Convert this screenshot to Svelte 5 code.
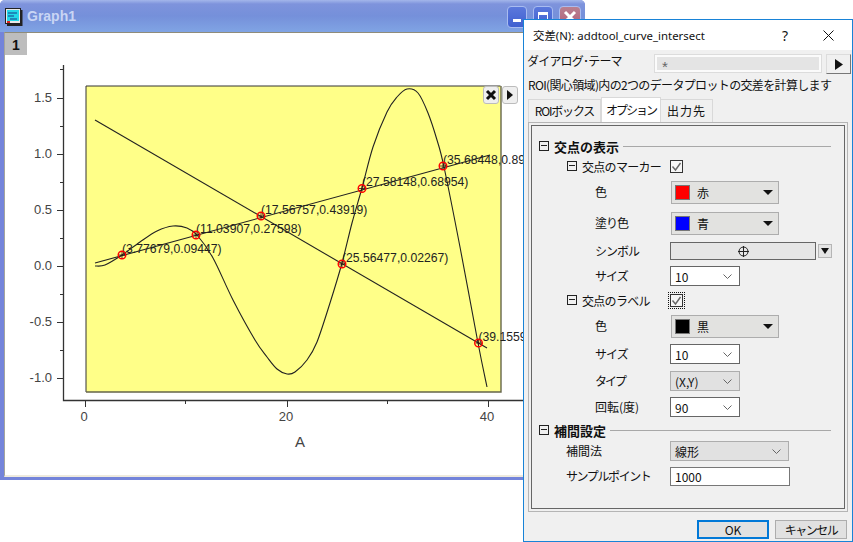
<script>
  // Graph data in pixel coordinates of the plot svg
  const curve = [[95,266],[105,265],[122,255],[140,242],[157,231],[173,226],[187,228],[197,235],[213,258],[233,300],[255,340],[267,357],[277,369],[287,374],[295,372],[307,360],[317,342],[330,303],[342,263],[352,223],[362,188],[373,147],[387,112],[397,97],[407,89],[418,93],[428,113],[437,140],[444,167],[460,247],[478,343],[487,387]]

  function smooth(pts) {
    let d = `M${pts[0][0]} ${pts[0][1]}`
    for (let i = 0; i < pts.length - 1; i++) {
      const p0 = pts[Math.max(i - 1, 0)]
      const p1 = pts[i]
      const p2 = pts[i + 1]
      const p3 = pts[Math.min(i + 2, pts.length - 1)]
      const c1 = [p1[0] + (p2[0] - p0[0]) / 6, p1[1] + (p2[1] - p0[1]) / 6]
      const c2 = [p2[0] - (p3[0] - p1[0]) / 6, p2[1] - (p3[1] - p1[1]) / 6]
      d += ` C${c1[0]} ${c1[1]} ${c2[0]} ${c2[1]} ${p2[0]} ${p2[1]}`
    }
    return d
  }

  const curvePath = smooth(curve)

  const markers = [
    { x: 122, y: 255, label: '(3.77679,0.09447)' },
    { x: 196, y: 235, label: '(11.03907,0.27598)' },
    { x: 261, y: 216, label: '(17.56757,0.43919)' },
    { x: 362, y: 188.5, label: '(27.58148,0.68954)' },
    { x: 443, y: 166, label: '(35.68448,0.89211)' },
    { x: 342, y: 264, label: '(25.56477,0.02267)' },
    { x: 478.5, y: 343, label: '(39.15598,-0.68)' }
  ]

  const yMajor = [[98, '1.5'], [154, '1.0'], [210, '0.5'], [266, '0.0'], [322, '-0.5'], [378, '-1.0']]
  const yMinor = [69, 126, 182, 238, 294, 350]
  const xMajor = [[85, '0'], [287, '20'], [488, '40']]
  const xMinor = [185, 387]
</script>

<div class="desktop">
  <section class="graph">
    <header class="graph__title">
      <svg class="graph__icon" width="18" height="18" viewBox="0 0 18 18">
        <rect x="0.5" y="0.5" width="15" height="15" fill="#e8e8e8" stroke="#222" />
        <rect x="2" y="2" width="12" height="11" fill="#22d8e8" />
        <path d="M3 5h9M3 8h6M5 11h7" stroke="#1a3a8a" />
        <rect x="2" y="13" width="3" height="2" fill="#e02020" />
        <path d="M16.5 2v15H2" fill="none" stroke="#222" stroke-width="2" />
      </svg>
      <span class="graph__name">Graph1</span>
      <div class="graph__controls">
        <button class="wbtn wbtn--min" aria-label="最小化"><i></i></button>
        <button class="wbtn wbtn--max" aria-label="最大化"><i></i></button>
        <button class="wbtn wbtn--close" aria-label="閉じる">
          <svg width="14" height="14" viewBox="0 0 14 14"><path d="M2 2l10 10M12 2L2 12" stroke="#fff" stroke-width="3" /></svg>
        </button>
      </div>
    </header>
    <div class="graph__body">
      <div class="layer-tab">1</div>
      <svg class="plot" width="580" height="446" viewBox="0 33 580 446">
        <rect x="86" y="86" width="415" height="306" fill="#ffff88" />
        <path d="M86 392V86H500.5" fill="none" stroke="#333" />
        <path d="M86 392H501V86" fill="none" stroke="#66664a" stroke-width="1.4" />

        <path d="M63.5 65V400.5H530" fill="none" stroke="#333" stroke-width="1.3" />
        {#each yMajor as [y, t]}
          <path d={`M57 ${y}.5H63`} stroke="#333" />
          <text class="tick" x="52" y={y + 4} text-anchor="end">{t}</text>
        {/each}
        {#each yMinor as y}
          <path d={`M60 ${y}.5H63`} stroke="#333" />
        {/each}
        {#each xMajor as [x, t]}
          <path d={`M${x}.5 400V407`} stroke="#333" />
          <text class="tick" x={x - 1} y="421" text-anchor="middle">{t}</text>
        {/each}
        {#each xMinor as x}
          <path d={`M${x}.5 400V404`} stroke="#333" />
        {/each}
        <text class="axis-title" x="300" y="447" text-anchor="middle">A</text>

        <path d="M95 120L487 348" fill="none" stroke="#222" stroke-width="1.1" />
        <path d="M95 263L490 155" fill="none" stroke="#222" stroke-width="1.1" />
        <path d={curvePath} fill="none" stroke="#222" stroke-width="1.1" />

        {#each markers as m}
          <text class="point-label" x={m.x} y={m.y - 2.5}>{m.label}</text>
          <path d={`M${m.x - 3} ${m.y}H${m.x + 3}M${m.x} ${m.y - 3}V${m.y + 3}`} stroke="#311" stroke-width="0.8" />
          <circle cx={m.x} cy={m.y} r="3.8" fill="none" stroke="#f00" stroke-width="1.4" />
        {/each}
      </svg>

      <div class="layer-btns">
        <button class="mini" aria-label="閉じる">
          <svg width="12" height="12" viewBox="0 0 12 12"><path d="M2 2l8 8M10 2l-8 8" stroke="#111" stroke-width="3" /></svg>
        </button>
        <button class="mini" aria-label="次へ">
          <svg width="8" height="10" viewBox="0 0 8 10"><path d="M1 0l6 5-6 5z" fill="#111" /></svg>
        </button>
      </div>
    </div>
  </section>

  <section class="dialog">
    <header class="dialog__title">
      <span class="dialog__name">交差(N): addtool_curve_intersect</span>
      <span class="dialog__help">?</span>
      <svg class="dialog__x" width="11" height="11" viewBox="0 0 11 11"><path d="M.5.5l10 10M10.5.5l-10 10" stroke="#111" stroke-width="1" /></svg>
    </header>

    <div class="theme">
      <span class="theme__label">ダイアログ･テーマ</span>
      <div class="theme__input">*</div>
      <button class="theme__btn" aria-label="メニュー">
        <svg width="8" height="11" viewBox="0 0 8 11"><path d="M0 0l8 5.5L0 11z" fill="#111" /></svg>
      </button>
    </div>

    <p class="desc">ROI(関心領域)内の2つのデータプロットの交差を計算します</p>

    <nav class="tabs">
      <span class="tab tab--a">ROIボックス</span>
      <span class="tab tab--b tab--active">オプション</span>
      <span class="tab tab--c">出力先</span>
    </nav>

    <div class="panel">
      <div class="rows">
        <div class="row group">
          <span class="box"></span>
          <b>交点の表示</b>
          <span class="rule"></span>
        </div>
        <div class="row sub">
          <span class="box"></span>
          <span class="sub__text">交点のマーカー</span>
          <span class="check">
            <svg width="13" height="13" viewBox="0 0 13 13"><path d="M2.5 6.5l3 3.5 5-7" fill="none" stroke="#666" stroke-width="1.4" /></svg>
          </span>
        </div>
        <div class="row">
          <span class="lbl">色</span>
          <div class="colorbox"><i class="swatch swatch--red"></i><span>赤</span><em></em></div>
        </div>
        <div class="row">
          <span class="lbl lbl--tight">塗り色</span>
          <div class="colorbox"><i class="swatch swatch--blue"></i><span>青</span><em></em></div>
        </div>
        <div class="row">
          <span class="lbl lbl--tight">シンボル</span>
          <div class="symbol">
            <svg width="11" height="11" viewBox="0 0 11 11"><circle cx="5.5" cy="5.5" r="4.5" fill="none" stroke="#222" /><path d="M0 5.5h11M5.5 0v11" stroke="#222" /></svg>
          </div>
          <div class="symbol__arrow"><em></em></div>
        </div>
        <div class="row">
          <span class="lbl lbl--tight">サイズ</span>
          <div class="combo combo--s">10<svg class="chev" width="9" height="5" viewBox="0 0 9 5"><path d="M.5.5l4 4 4-4" fill="none" stroke="#666" /></svg></div>
        </div>
        <div class="row sub">
          <span class="box"></span>
          <span class="sub__text">交点のラベル</span>
          <span class="check check--focus">
            <svg width="13" height="13" viewBox="0 0 13 13"><path d="M2.5 6.5l3 3.5 5-7" fill="none" stroke="#666" stroke-width="1.4" /></svg>
          </span>
        </div>
        <div class="row">
          <span class="lbl">色</span>
          <div class="colorbox"><i class="swatch swatch--black"></i><span>黒</span><em></em></div>
        </div>
        <div class="row">
          <span class="lbl lbl--tight">サイズ</span>
          <div class="combo combo--s">10<svg class="chev" width="9" height="5" viewBox="0 0 9 5"><path d="M.5.5l4 4 4-4" fill="none" stroke="#666" /></svg></div>
        </div>
        <div class="row">
          <span class="lbl lbl--tighter">タイプ</span>
          <div class="combo combo--s combo--off">(X,Y)<svg class="chev" width="9" height="5" viewBox="0 0 9 5"><path d="M.5.5l4 4 4-4" fill="none" stroke="#666" /></svg></div>
        </div>
        <div class="row">
          <span class="lbl">回転(度)</span>
          <div class="combo combo--s">90<svg class="chev" width="9" height="5" viewBox="0 0 9 5"><path d="M.5.5l4 4 4-4" fill="none" stroke="#666" /></svg></div>
        </div>
        <div class="row group">
          <span class="box"></span>
          <b>補間設定</b>
          <span class="rule"></span>
        </div>
        <div class="row">
          <span class="lbl lbl--near">補間法</span>
          <div class="combo combo--l combo--off">線形<svg class="chev" width="9" height="5" viewBox="0 0 9 5"><path d="M.5.5l4 4 4-4" fill="none" stroke="#666" /></svg></div>
        </div>
        <div class="row">
          <span class="lbl lbl--near lbl--sample">サンプルポイント</span>
          <div class="field">1000</div>
        </div>
      </div>
    </div>

    <footer class="footer">
      <button class="btn btn--ok">OK</button>
      <button class="btn btn--cancel">キャンセル</button>
    </footer>
  </section>
</div>

<style>
  :global(body) {
    margin: 0;
    background: #fff;
  }

  .desktop {
    position: relative;
    width: 853px;
    height: 542px;
    overflow: hidden;
    background: #fff;
  }

  /* graph window */
  .graph {
    position: absolute;
    left: 0;
    top: 0;
    width: 585px;
    height: 480px;
    box-sizing: border-box;
    display: flex;
    flex-direction: column;
    background: #7484da;
    border-radius: 5px 5px 0 0;
    padding: 0 2px 3px 0;
  }

  .graph__title {
    height: 32px;
    flex: none;
    display: flex;
    align-items: center;
    padding-left: 5px;
    background: linear-gradient(#a3b6ea 0, #7e93dc 4px, #7590da 16px, #80a4e4 32px);
    margin-right: -2px;
    border-radius: 5px 5px 0 0;
  }

  .graph__icon {
    flex: none;
    margin-top: 1px;
  }

  .graph__name {
    margin-left: 4px;
    font: bold 14px "Liberation Sans", sans-serif;
    color: #c9d5f4;
  }

  .graph__controls {
    margin-left: auto;
    margin-right: 4px;
    margin-top: 2px;
    display: flex;
    gap: 6px;
  }

  .wbtn {
    width: 20px;
    height: 22px;
    padding: 0;
    border: 1px solid #a9bcf0;
    border-radius: 4px;
    display: flex;
    align-items: center;
    justify-content: center;
    background: linear-gradient(#5b78dc, #4060d0);
  }

  .wbtn--min i {
    width: 8px;
    height: 3px;
    margin-top: 6px;
    background: #fff;
  }

  .wbtn--max i {
    width: 10px;
    height: 11px;
    box-sizing: border-box;
    border: 1px solid #fff;
    border-top-width: 3px;
  }

  .wbtn--close {
    width: 22px;
    background: linear-gradient(#b98090, #b0607a);
  }

  .graph__body {
    position: relative;
    flex: 1;
    margin-left: 4px;
    background: #fff;
    border-top: 1px solid #8f8c7a;
    border-left: 1px solid #a5a59c;
    border-bottom: 2px solid #eeeade;
    overflow: hidden;
  }

  .layer-tab {
    position: absolute;
    left: 0;
    top: 0;
    width: 22px;
    height: 22px;
    background: #bdbdbd;
    color: #111;
    font: bold 14px/24px "Liberation Sans", sans-serif;
    text-align: center;
  }

  .plot {
    display: block;
    margin-left: -5px;
  }

  .tick {
    font: 13px "Liberation Sans", sans-serif;
    fill: #444;
  }

  .axis-title {
    font: 15px "Liberation Sans", sans-serif;
    fill: #444;
  }

  .point-label {
    font: 12.2px "Liberation Sans", sans-serif;
    fill: #222;
  }

  .layer-btns {
    position: absolute;
    left: 478px;
    top: 53px;
    display: flex;
    gap: 3px;
  }

  .mini {
    width: 16px;
    height: 18px;
    padding: 0;
    display: flex;
    align-items: center;
    justify-content: center;
    background: #efefef;
    border: 1px solid #bcbcbc;
    border-radius: 3px;
  }

  /* dialog */
  .dialog {
    position: absolute;
    left: 523px;
    top: 19px;
    width: 330px;
    height: 523px;
    box-sizing: border-box;
    border: 1px solid #1883d7;
    background: #f0f0f0;
    color: #111;
    font: 12px "Noto Sans CJK JP", sans-serif;
    display: flex;
    flex-direction: column;
  }

  .dialog__title {
    height: 30px;
    flex: none;
    display: flex;
    align-items: center;
    padding-left: 9px;
    background: #fff;
  }

  .dialog__name {
    font: 11.4px "Noto Sans", "Noto Sans CJK JP", sans-serif;
    color: #111;
  }

  .dialog__help {
    margin-left: auto;
    font: 14px "Noto Sans", sans-serif;
  }

  .dialog__x {
    margin: 0 18px 0 35px;
  }

  .theme {
    height: 20px;
    margin-top: 4px;
    flex: none;
    display: flex;
  }

  .theme__label {
    width: 127px;
    padding-left: 3px;
    line-height: 14px;
    letter-spacing: -0.8px;
  }

  .theme__input {
    width: 168px;
    box-sizing: border-box;
    height: 19px;
    border: 3px solid #fbfbfb;
    outline: 1px solid #dcdcdc;
    outline-offset: -1px;
    background: #e4e4e4;
    padding-left: 5px;
    color: #666;
    font: 15px/20px "Liberation Sans", sans-serif;
  }

  .theme__btn {
    width: 25px;
    height: 20px;
    margin-left: 4px;
    padding: 0;
    background: #f0f0f0;
    border: 1px solid #dcdcdc;
    border-right-color: #777;
    border-bottom-color: #777;
    display: flex;
    align-items: center;
    justify-content: center;
  }

  .desc {
    margin: 0;
    height: 23px;
    flex: none;
    padding-left: 4px;
    line-height: 22px;
    white-space: nowrap;
    letter-spacing: -0.65px;
  }

  .tabs {
    height: 25px;
    flex: none;
    display: flex;
    align-items: flex-end;
    margin-left: 4px;
  }

  .tab {
    box-sizing: border-box;
    height: 23px;
    border: 1px solid #d9d9d9;
    border-bottom: 0;
    text-align: center;
    line-height: 21px;
    white-space: nowrap;
  }

  .tab--a { width: 73px; letter-spacing: -1.2px; }
  .tab--b { width: 60px; letter-spacing: -2px; }
  .tab--c { width: 52px; border-left: 0; letter-spacing: 1px; }

  .tab--active {
    height: 25px;
    background: #fff;
    line-height: 24px;
    position: relative;
    z-index: 1;
  }

  .panel {
    flex: none;
    height: 390px;
    margin: 0 4px;
    box-sizing: border-box;
    border: 1px solid #b5b5b5;
    padding: 2px;
    background: #f0f0f0;
  }

  .rows {
    height: 100%;
    box-sizing: border-box;
    border: 1px solid #666;
    padding: 10px 0 0 7px;
    display: grid;
    grid-template-rows: 20px 20px 32px 30px 26px 24px 24px 28px 28px 26px 26px 20px 22px 28px;
    align-content: start;
  }

  .row {
    display: flex;
    align-items: center;
    min-width: 0;
  }

  .box {
    position: relative;
    width: 10px;
    height: 10px;
    flex: none;
    box-sizing: border-box;
    border: 1px solid #222;
  }

  .box::after {
    content: "";
    position: absolute;
    left: 1px;
    right: 1px;
    top: 3px;
    height: 1px;
    background: #222;
  }

  .group b {
    margin-left: 5px;
    font-size: 13px;
    font-weight: 700;
    white-space: nowrap;
  }

  .rule {
    flex: 1;
    height: 1px;
    margin: 0 13px 0 4px;
    background: #a8a8a8;
  }

  .sub .box {
    margin-left: 28px;
  }

  .sub__text {
    width: 88px;
    margin-left: 5px;
    white-space: nowrap;
    letter-spacing: -0.7px;
  }

  .check {
    width: 13px;
    height: 13px;
    box-sizing: border-box;
    display: flex;
    border: 1px solid #333;
    background: #f6f6f6;
    align-items: center;
    justify-content: center;
  }

  .check svg {
    flex: none;
  }

  .check--focus {
    outline: 1px dotted #111;
    outline-offset: 1px;
  }

  .lbl {
    width: 75px;
    margin-left: 56px;
    margin-bottom: 2px;
    flex: none;
    white-space: nowrap;
  }

  .lbl--tight { letter-spacing: -1px; }
  .lbl--tighter { letter-spacing: -2px; }

  .lbl--near {
    width: 104px;
    margin-left: 27px;
  }

  .lbl--sample { letter-spacing: -1.4px; }

  .colorbox {
    width: 108px;
    height: 23px;
    margin-left: 1px;
    box-sizing: border-box;
    border: 1px solid #adadad;
    background: #e2e2e0;
    display: flex;
    align-items: center;
    padding-left: 3px;
  }

  .colorbox span {
    margin-left: 7px;
  }

  .colorbox em {
    width: 0;
    height: 0;
    margin: 1px 5px 0 auto;
    border: 5px solid transparent;
    border-top: 5px solid #111;
    border-bottom: 0;
  }

  .swatch {
    width: 15px;
    height: 15px;
    box-sizing: border-box;
    border: 1px solid #777;
  }

  .swatch--red { background: #f00; }
  .swatch--blue { background: #00f; }
  .swatch--black { background: #000; }

  .symbol {
    width: 146px;
    height: 18px;
    box-sizing: border-box;
    border: 1px solid #666;
    background: #e6e6e6;
    display: flex;
    align-items: center;
    justify-content: center;
  }

  .symbol__arrow {
    width: 14px;
    height: 14px;
    margin-left: 2px;
    box-sizing: border-box;
    border: 1px solid #b5b5b5;
    background: #e4e4e4;
    display: flex;
    align-items: center;
    justify-content: center;
  }

  .symbol__arrow em {
    width: 0;
    height: 0;
    border: 4px solid transparent;
    border-top: 6px solid #111;
    border-bottom: 0;
  }

  .combo {
    height: 20px;
    box-sizing: border-box;
    border: 1px solid #666;
    background: #fff;
    display: flex;
    align-items: center;
    padding: 0 4px;
    font-size: 12px;
  }

  .combo--s { width: 70px; }
  .combo--l { width: 119px; }

  .combo--off {
    background: #e1e1e1;
    border-color: #adadad;
  }

  .chev {
    margin: 1px 3px 0 auto;
  }

  .field {
    width: 120px;
    height: 19px;
    box-sizing: border-box;
    border: 1px solid #777;
    background: #fff;
    padding-left: 4px;
    line-height: 17px;
  }

  .footer {
    flex: none;
    display: flex;
    justify-content: flex-end;
    gap: 6px;
    padding: 8px 5px 0 0;
  }

  .btn {
    width: 72px;
    height: 19px;
    padding: 0;
    box-sizing: border-box;
    background: #e1e1e1;
    border: 1px solid #adadad;
    color: #111;
    font: 12px/16px "Noto Sans CJK JP", sans-serif;
  }

  .btn--ok {
    border: 2px solid #0078d7;
  }

  .btn--cancel {
    letter-spacing: -1.5px;
  }
</style>
